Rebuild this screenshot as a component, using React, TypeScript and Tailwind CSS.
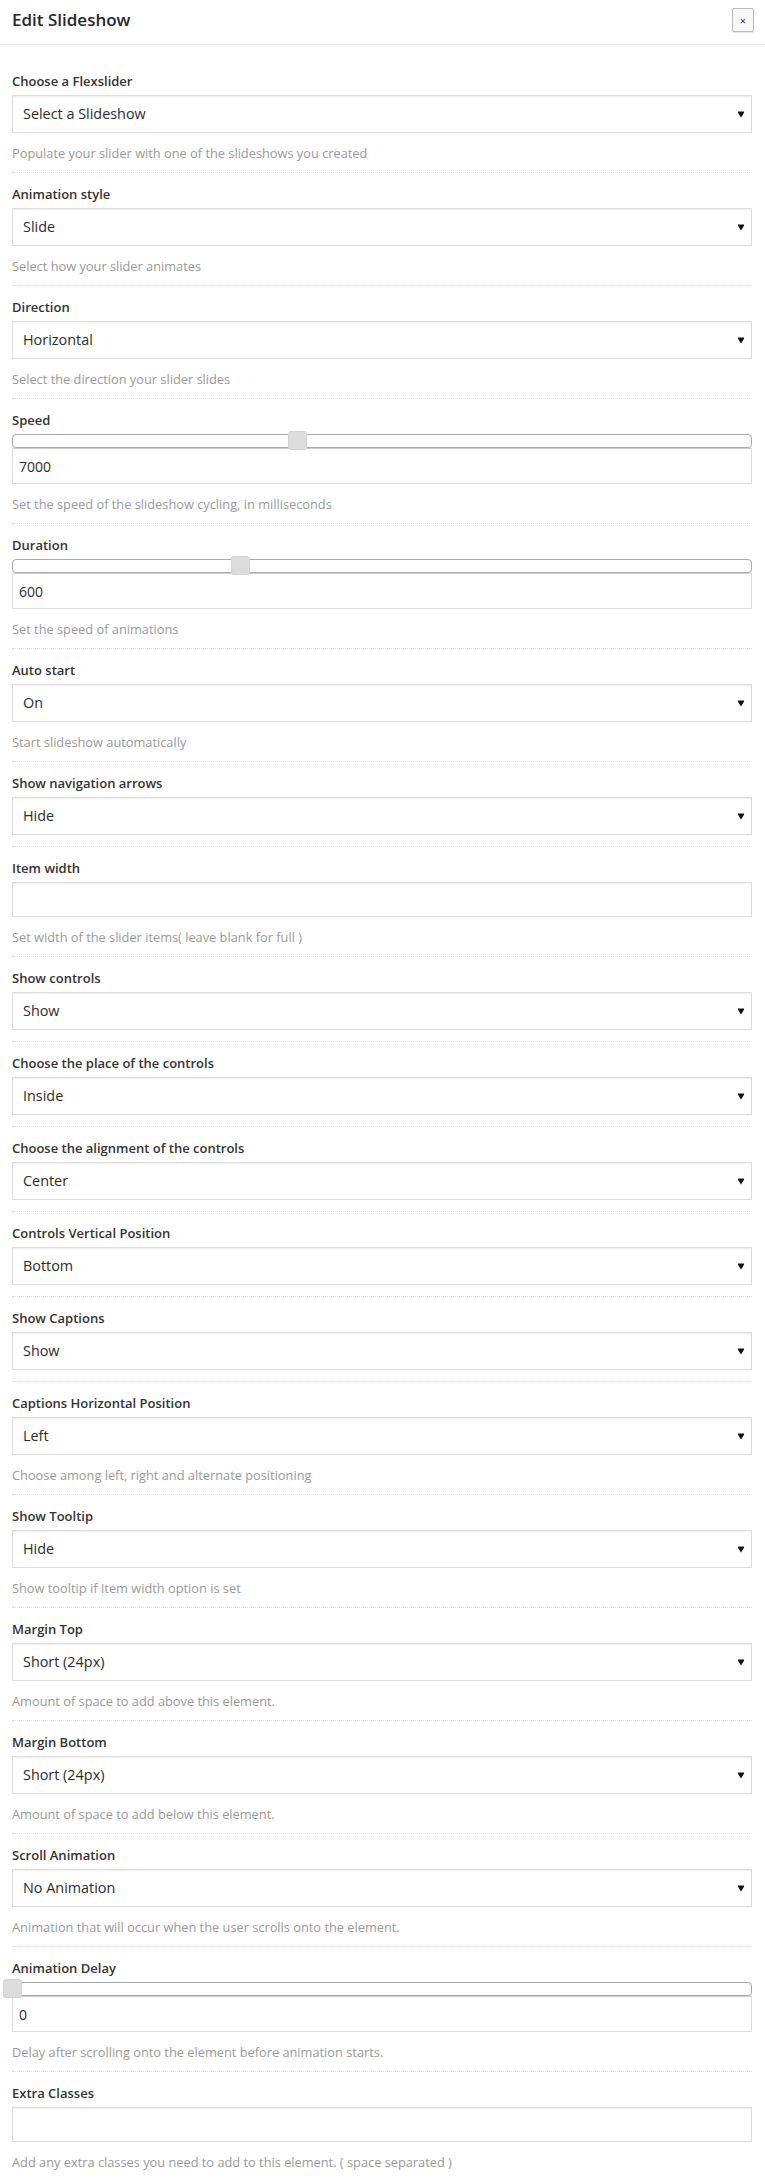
import React from "react";

type Field =
  | { kind: "select"; label: string; value: string; desc?: string }
  | { kind: "slider"; label: string; value: string; pct: number; desc?: string }
  | { kind: "text"; label: string; value: string; desc?: string };

const fields: Field[] = [
  { kind: "select", label: "Choose a Flexslider", value: "Select a Slideshow", desc: "Populate your slider with one of the slideshows you created" },
  { kind: "select", label: "Animation style", value: "Slide", desc: "Select how your slider animates" },
  { kind: "select", label: "Direction", value: "Horizontal", desc: "Select the direction your slider slides" },
  { kind: "slider", label: "Speed", value: "7000", pct: 38.6, desc: "Set the speed of the slideshow cycling, in milliseconds" },
  { kind: "slider", label: "Duration", value: "600", pct: 30.9, desc: "Set the speed of animations" },
  { kind: "select", label: "Auto start", value: "On", desc: "Start slideshow automatically" },
  { kind: "select", label: "Show navigation arrows", value: "Hide" },
  { kind: "text", label: "Item width", value: "", desc: "Set width of the slider items( leave blank for full )" },
  { kind: "select", label: "Show controls", value: "Show" },
  { kind: "select", label: "Choose the place of the controls", value: "Inside" },
  { kind: "select", label: "Choose the alignment of the controls", value: "Center" },
  { kind: "select", label: "Controls Vertical Position", value: "Bottom" },
  { kind: "select", label: "Show Captions", value: "Show" },
  { kind: "select", label: "Captions Horizontal Position", value: "Left", desc: "Choose among left, right and alternate positioning" },
  { kind: "select", label: "Show Tooltip", value: "Hide", desc: "Show tooltip if Item width option is set" },
  { kind: "select", label: "Margin Top", value: "Short (24px)", desc: "Amount of space to add above this element." },
  { kind: "select", label: "Margin Bottom", value: "Short (24px)", desc: "Amount of space to add below this element." },
  { kind: "select", label: "Scroll Animation", value: "No Animation", desc: "Animation that will occur when the user scrolls onto the element." },
  { kind: "slider", label: "Animation Delay", value: "0", pct: 0, desc: "Delay after scrolling onto the element before animation starts." },
  { kind: "text", label: "Extra Classes", value: "", desc: "Add any extra classes you need to add to this element. ( space separated )" },
];

function Arrow() {
  return (
    <svg width="6" height="7" viewBox="0 0 6 7" className="shrink-0">
      <path d="M0 0.5 H6 V1.8 L3 6.5 L0 1.8 Z" fill="#111" />
    </svg>
  );
}

function Section({ f, last }: { f: Field; last: boolean }) {
  return (
    <div
      className={
        (last ? "" : "border-b border-dotted border-[#dcdcdc] ") +
        "pt-3 " +
        (f.desc ? "pb-[10px]" : "pb-[11px]")
      }
    >
      <div className="text-[13px] font-semibold leading-[18px] text-[#333]">{f.label}</div>
      {f.kind === "select" && (
        <div className="mt-[5px] flex h-[38px] items-center justify-between border border-[#dddddd] bg-white pl-[10px] pr-[7px] text-[14.4px] text-[#2c2c2c] shadow-[inset_0_1px_2px_rgba(0,0,0,0.07)]">
          <span>{f.value}</span>
          <Arrow />
        </div>
      )}
      {f.kind === "slider" && (
        <>
          <div className="relative mt-[5px] h-[14px] rounded-[4px] border border-[#aaaaaa] bg-white shadow-[0_1px_1px_rgba(0,0,0,0.08)]">
            <span
              className="absolute top-[-4px] -ml-[10px] h-[19px] w-[19px] rounded-[3px] border border-[#d3d3d3] bg-[#dcdcdc]"
              style={{ left: `${f.pct}%` }}
            />
          </div>
          <div className="flex h-[36px] items-center border border-[#dddddd] bg-white px-[6px] text-[14px] text-[#2c2c2c]">
            {f.value}
          </div>
        </>
      )}
      {f.kind === "text" && (
        <div className="mt-[5px] h-[35px] border border-[#dddddd] bg-white shadow-[inset_0_1px_2px_rgba(0,0,0,0.07)]" />
      )}
      {f.desc && <p className="mt-[11px] text-[12.8px] leading-[18px] text-[#999]">{f.desc}</p>}
    </div>
  );
}

export default function App() {
  return (
    <div className="min-h-[2178px] bg-white font-['Open_Sans',sans-serif]">
      <header className="flex h-[45px] items-center justify-between border-b border-[#e5e5e5] pb-1 pl-3 pr-[11px]">
        <h1 className="text-[17px] font-semibold text-[#23282d]">Edit Slideshow</h1>
        <button className="flex h-6 w-[22px] items-center justify-center rounded-[2px] border border-[#bbbbbb] bg-[#f7f7f7] text-[11px] leading-none text-[#333] shadow-[0_1px_0_rgba(0,0,0,0.08)]">
          ×
        </button>
      </header>
      <div className="pl-3 pr-[13px] pt-[15px]">
        {fields.map((f, i) => (
          <Section key={i} f={f} last={i === fields.length - 1} />
        ))}
      </div>
    </div>
  );
}
